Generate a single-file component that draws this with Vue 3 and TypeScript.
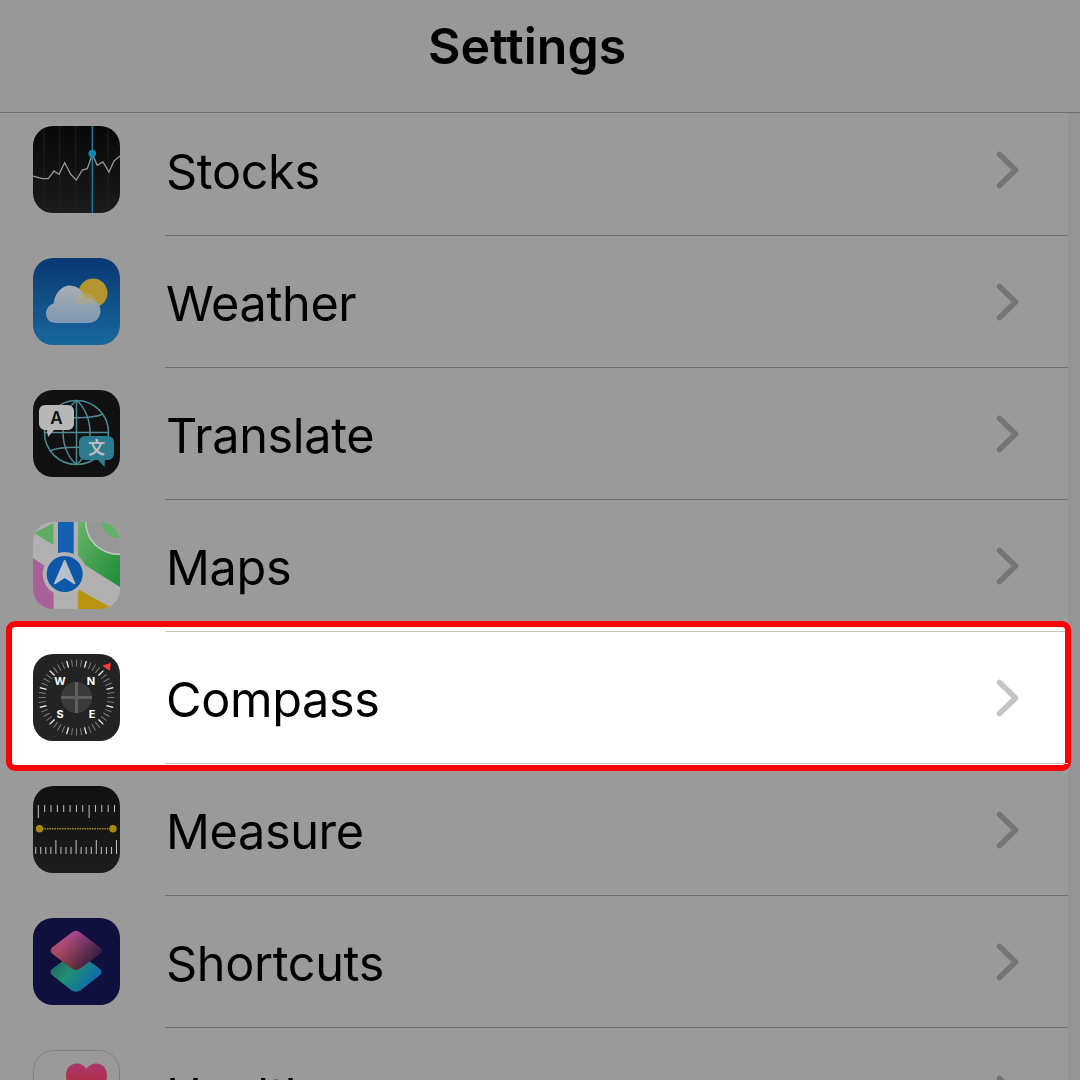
<template>
  <div class="page">
    <header class="topbar">Settings</header>
    <div class="main">
      <div class="list">
        <div v-for="row in rows" :key="row.name" class="row" :class="{ 'is-active': row.active }">
          <div v-if="row.active" class="frame"></div>
          <svg class="icon" viewBox="0 0 87 87">
            <defs>
              <clipPath :id="`clip-${row.name}`"><rect width="87" height="87" rx="20" /></clipPath>
            </defs>
            <g :clip-path="`url(#clip-${row.name})`">
              <!-- Stocks -->
              <template v-if="row.name === 'Stocks'">
                <defs>
                  <linearGradient id="stocks-bg" x1="0" y1="0" x2="0" y2="1">
                    <stop offset="0" stop-color="#070707" />
                    <stop offset="1" stop-color="#1c1c1c" />
                  </linearGradient>
                </defs>
                <rect width="87" height="87" fill="url(#stocks-bg)" />
                <path d="M11 0V87M26.7 0V87M42.7 0V87M75 0V87" stroke="#202020" stroke-width="1" />
                <path d="M59.3 0V87" stroke="#0f7ea0" stroke-width="1.4" />
                <polyline
                  points="0,50 9.3,52.7 15.3,52.7 21,45 26,48.3 31.7,36.7 37.7,48.3 43.3,54 49.3,44 54.3,42.7 59.3,28.3 64.3,39.3 70,36 76,46 81,35 87,30"
                  fill="none"
                  stroke="#969696"
                  stroke-width="1.3"
                />
                <circle cx="59.3" cy="27.5" r="3.8" fill="#0f88ad" />
              </template>

              <!-- Weather -->
              <template v-else-if="row.name === 'Weather'">
                <defs>
                  <linearGradient id="weather-bg" x1="0" y1="0" x2="0" y2="1">
                    <stop offset="0" stop-color="#0a3873" />
                    <stop offset="1" stop-color="#17689d" />
                  </linearGradient>
                  <linearGradient id="cloud" gradientUnits="userSpaceOnUse" x1="0" y1="27" x2="0" y2="65">
                    <stop offset="0" stop-color="#a8aeb2" />
                    <stop offset="1" stop-color="#7f98b1" />
                  </linearGradient>
                </defs>
                <rect width="87" height="87" fill="url(#weather-bg)" />
                <circle cx="60" cy="35" r="14.5" fill="#b3962f" />
                <path
                  d="M23 65C16 65 13 60 13 55.5C13 50 17 46.500 20.500 45.500C22 34 30 27.500 36 27.500C43 27.500 49 31 52 39.500C60 39.500 67.500 45 67.500 53C67.500 60 62 65 56 65Z"
                  fill="url(#cloud)"
                />
                <ellipse cx="52" cy="41" rx="10" ry="6" fill="#b5a878" opacity="0.5" />
              </template>

              <!-- Translate -->
              <template v-else-if="row.name === 'Translate'">
                <rect width="87" height="87" fill="#111112" />
                <g fill="none" stroke="#4f8a94" stroke-width="1.500">
                  <circle cx="43.500" cy="42.500" r="32" />
                  <path d="M43.500 10.500V74.500M11.500 42.500H75.500" />
                  <path d="M43.500 10.500C52 17 57 30 57 42.500C57 55 52 68 43.500 74.500" />
                  <path d="M43.500 10.500C35 17 30 30 30 42.500C30 55 35 68 43.500 74.500" />
                  <path d="M17 24C26 29 60 29 70 24M17 61C26 56 60 56 70 61" />
                </g>
                <path
                  d="M12 15H35A6 6 0 0 1 41 21V34A6 6 0 0 1 35 40H21L15 47L14 40H12A6 6 0 0 1 6 34V21A6 6 0 0 1 12 15Z"
                  fill="#b7b7b7"
                />
                <text x="23.500" y="34" class="translate-a">A</text>
                <path
                  d="M52 46H75A6 6 0 0 1 81 52V64A6 6 0 0 1 75 70H72L71.500 77L65 70H52A6 6 0 0 1 46 64V52A6 6 0 0 1 52 46Z"
                  fill="#2c7b8e"
                />
                <text x="63.500" y="64" class="translate-zh">文</text>
              </template>

              <!-- Maps -->
              <template v-else-if="row.name === 'Maps'">
                <defs>
                  <linearGradient id="maps-green" x1="0" y1="0" x2="1" y2="1">
                    <stop offset="0" stop-color="#69b46a" />
                    <stop offset="1" stop-color="#1c8b34" />
                  </linearGradient>
                </defs>
                <rect width="87" height="87" fill="#b0b0b0" />
                <path d="M1 11L20.500 1V23Z" fill="#5fae62" />
                <path d="M45 0H87V65L52 43L45 33Z" fill="url(#maps-green)" />
                <circle cx="85" cy="0" r="33" fill="#c6c6c6" />
                <circle cx="85" cy="0" r="31.500" fill="#979797" />
                <circle cx="85" cy="0" r="16" fill="#62b065" />
                <path d="M0 36L20.700 50V87H0Z" fill="#a9609a" />
                <path d="M44.700 67L77 85L74 87H44.700Z" fill="#b8940f" />
                <rect x="25" y="0" width="15.700" height="34" fill="#1560b0" />
                <circle cx="31.700" cy="52" r="22" fill="#b2b2b2" />
                <circle cx="31.700" cy="52" r="18" fill="#0d57a8" />
                <path d="M31.700 38.500L41.700 61.500L31.700 55L21.700 61.500Z" fill="#b9bfc8" stroke="#b9bfc8" stroke-linejoin="round" stroke-width="1.500" />
              </template>

              <!-- Compass -->
              <template v-else-if="row.name === 'Compass'">
                <rect width="87" height="87" fill="#232323" />
                <line
                  v-for="tick in compassTicks"
                  :key="tick.deg"
                  x1="43.500"
                  y1="5.500"
                  x2="43.500"
                  y2="12.500"
                  :stroke="tick.major ? '#f2f2f2' : '#7c7c7c'"
                  :stroke-width="tick.major ? 1.300 : 1"
                  :transform="`rotate(${tick.deg} 43.500 43.500)`"
                />
                <circle cx="43.500" cy="43.500" r="15.500" fill="#3a3a3a" />
                <path d="M43.500 28V59M28 43.500H59" stroke="#5e5e5e" stroke-width="3" />
                <text x="27" y="31" class="compass-dir">W</text>
                <text x="58" y="31" class="compass-dir">N</text>
                <text x="27" y="64" class="compass-dir">S</text>
                <text x="59" y="64" class="compass-dir">E</text>
                <path d="M69.300 11.700L78 8.700L76.700 16.700Z" fill="#ff3b30" />
              </template>

              <!-- Measure -->
              <template v-else-if="row.name === 'Measure'">
                <defs>
                  <linearGradient id="measure-bg" x1="0" y1="0" x2="0" y2="1">
                    <stop offset="0" stop-color="#111111" />
                    <stop offset="1" stop-color="#1d1d1d" />
                  </linearGradient>
                </defs>
                <rect width="87" height="87" fill="url(#measure-bg)" />
                <line
                  v-for="(tick, i) in rulerTop"
                  :key="`t${i}`"
                  :x1="tick.x"
                  y1="19"
                  :x2="tick.x"
                  :y2="tick.major ? 32 : 26"
                  stroke="#c4c4c4"
                  stroke-width="1"
                />
                <line
                  v-for="(tick, i) in rulerBottom"
                  :key="`b${i}`"
                  :x1="tick.x"
                  y1="68"
                  :x2="tick.x"
                  :y2="tick.major ? 54 : 61"
                  stroke="#c4c4c4"
                  stroke-width="1"
                />
                <path d="M6.500 42.700H80" stroke="#a78a12" stroke-width="1.600" stroke-dasharray="1.500 1" />
                <circle cx="6.500" cy="42.700" r="3.700" fill="#a78a12" />
                <circle cx="80" cy="42.700" r="3.700" fill="#a78a12" />
              </template>

              <!-- Shortcuts -->
              <template v-else-if="row.name === 'Shortcuts'">
                <defs>
                  <linearGradient id="sc-bottom" x1="0" y1="0" x2="1" y2="0.600">
                    <stop offset="0" stop-color="#274f63" />
                    <stop offset="0.500" stop-color="#1f9072" />
                    <stop offset="1" stop-color="#0f66b4" />
                  </linearGradient>
                  <linearGradient id="sc-top" x1="0" y1="0" x2="0" y2="1">
                    <stop offset="0" stop-color="#a8488f" />
                    <stop offset="1" stop-color="#ac4a3e" />
                  </linearGradient>
                  <linearGradient id="sc-fade" x1="0.300" y1="0.300" x2="1" y2="0.700">
                    <stop offset="0" stop-color="#10103e" stop-opacity="0" />
                    <stop offset="1" stop-color="#10103e" stop-opacity="0.850" />
                  </linearGradient>
                </defs>
                <rect width="87" height="87" fill="#10103e" />
                <path
                  d="M38 37Q43 33 48 37L67 51Q70 54 67 57L48 72Q43 75.500 38 72L19 57Q16 54 19 51Z"
                  fill="url(#sc-bottom)"
                />
                <path
                  d="M38 15Q43 10.500 48 15L67 29.500Q70 32.500 67 35.500L48 50Q43 54 38 50L19 35.500Q16 32.500 19 29.500Z"
                  fill="url(#sc-top)"
                />
                <path
                  d="M38 15Q43 10.500 48 15L67 29.500Q70 32.500 67 35.500L48 50Q43 54 38 50L19 35.500Q16 32.500 19 29.500Z"
                  fill="url(#sc-fade)"
                />
              </template>

              <!-- Health -->
              <template v-else>
                <defs>
                  <linearGradient id="heart" gradientUnits="userSpaceOnUse" x1="0" y1="13" x2="0" y2="30">
                    <stop offset="0" stop-color="#ab3770" />
                    <stop offset="1" stop-color="#ae3048" />
                  </linearGradient>
                </defs>
                <rect x="0.500" y="0.500" width="86" height="86" rx="20" fill="#9a9a9a" stroke="#808080" />
                <path
                  d="M53.500 19C51 15 47 13.500 44 13.500C37 13.500 33 19 33 25C33 38 45 48 53.500 55C62 48 74 38 74 25C74 19 70 13.500 63 13.500C60 13.500 56 15 53.500 19Z"
                  fill="url(#heart)"
                />
              </template>
            </g>
          </svg>
          <div class="body">
            <span class="label">{{ row.name }}</span>
            <svg class="chevron" viewBox="0 0 24 38" fill="none">
              <path d="M3.500 3.500L19.500 19L3.500 34.500" stroke-width="5.500" stroke-linecap="round" stroke-linejoin="round" />
            </svg>
          </div>
        </div>
      </div>
      <div class="strip"></div>
    </div>
  </div>
</template>

<script setup lang="ts">
const names = ['Stocks', 'Weather', 'Translate', 'Maps', 'Compass', 'Measure', 'Shortcuts', 'Health']

const rows = names.map((name) => ({ name, active: name === 'Compass' }))

const compassTicks = Array.from({ length: 48 }, (_, i) => ({
  deg: i * 7.5 + 15,
  major: i % 4 === 0,
}))

const rulerTop = Array.from({ length: 13 }, (_, i) => ({
  x: 5.3 + i * 6.35,
  major: i === 0 || i === 8,
}))

const rulerBottom = Array.from({ length: 17 }, (_, i) => ({
  x: 2.7 + i * 5.05,
  major: i % 4 === 0 && i > 0,
}))
</script>

<style>
body {
  background: #9a9a9a;
}
</style>

<style scoped>
.page {
  width: 1080px;
  height: 1080px;
  overflow: hidden;
  background: #9a9a9a;
  font-family: Inter, 'Liberation Sans', sans-serif;
  color: #000;
}

.topbar {
  position: relative;
  z-index: 2;
  height: 113px;
  box-sizing: border-box;
  padding: 0 26px 20px 0;
  display: flex;
  align-items: center;
  justify-content: center;
  font-size: 50px;
  font-weight: 600;
  background: #989898;
  border-bottom: 1px solid #6e6e6e;
}

.main {
  display: flex;
  height: 967px;
}

.list {
  flex: 1;
  margin-top: -9px;
}

.strip {
  width: 12px;
  background: #949496;
}

.row {
  display: flex;
  align-items: center;
  height: 132px;
  padding-left: 33px;
}

.icon {
  width: 87px;
  height: 87px;
  flex-shrink: 0;
  margin-bottom: 2px;
}

.body {
  flex: 1;
  height: 132px;
  box-sizing: border-box;
  margin-left: 45px;
  padding-right: 48px;
  display: flex;
  align-items: center;
  justify-content: space-between;
  border-bottom: 1px solid #6f6f6f;
}

.label {
  padding: 4px 0 0 1px;
  font-size: 48.6px;
  letter-spacing: -0.35px;
}

.chevron {
  width: 24px;
  height: 38px;
  stroke: #757575;
}

.is-active {
  position: relative;
  z-index: 1;
}

.is-active .body {
  border-bottom-color: #c6c6c2;
}

.is-active .chevron {
  stroke: #c4c4c6;
}

/* red callout around the row */
.frame {
  position: absolute;
  z-index: -1;
  top: -11px;
  bottom: -7px;
  left: 6px;
  right: -3px;
  background: #fff;
  border: 6px solid #ff0000;
  border-radius: 9px;
}

.frame::before {
  content: '';
  position: absolute;
  top: 4px;
  left: 153px;
  right: 0;
  height: 1px;
  background: #c6c6c2;
}

.translate-a {
  font-size: 17px;
  font-weight: 600;
  text-anchor: middle;
  fill: #111;
}

.translate-zh {
  font-family: 'Noto Sans CJK SC', sans-serif;
  font-size: 17px;
  font-weight: 700;
  text-anchor: middle;
  fill: #bdbdbd;
}

.compass-dir {
  font-size: 11px;
  font-weight: 700;
  text-anchor: middle;
  fill: #fff;
}
</style>
